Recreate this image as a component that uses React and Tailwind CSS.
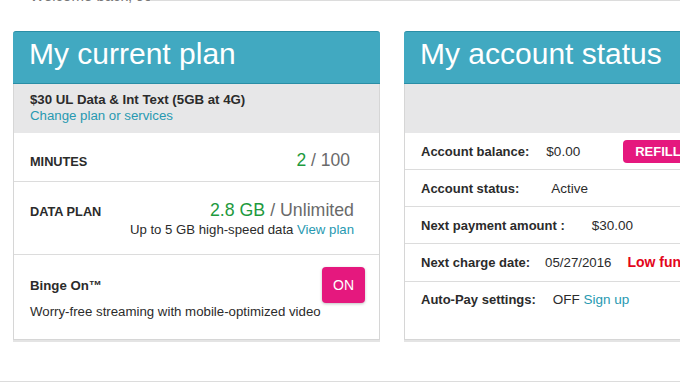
export default function App() {
  return (
    <div className="w-[680px] h-[382px] overflow-hidden bg-white flex flex-col font-['Liberation_Sans',Arial,sans-serif] text-[#333]">
      {/* clipped greeting line */}
      <div className="flex h-[3px] shrink-0">
        <div className="w-[150px] h-[3px] overflow-hidden">
          <div className="pl-[30px] -mt-[13px] text-[15px] leading-[17px] text-[#777] whitespace-nowrap">
            Welcome back, Joyce
          </div>
        </div>
        <div className="flex-1 border-t border-[#dcdcdc]"></div>
      </div>

      <div className="flex gap-[24px] pl-[13px] pt-[28px] flex-1">
        {/* Left card */}
        <div className="w-[367px] shrink-0 flex flex-col self-start shadow-[0_2px_0_#e4e4e4]">
          <div className="h-[53px] bg-[#41a9c1] border-t border-b border-[#2a8ea6] rounded-t-[3px] pl-[16px] pt-[7px]">
            <div className="text-[30px] leading-[30px] text-white">My current plan</div>
          </div>
          <div className="border-l border-r border-b border-[#d6d6d6] flex flex-col">
            <div className="h-[49px] bg-[#e7e7e8] pl-[16px] pt-[8px] text-[13.25px] leading-[16px]">
              <div className="font-bold text-[#2b2b2b]">$30 UL Data &amp; Int Text (5GB at 4G)</div>
              <div className="text-[#2799b1]">Change plan or services</div>
            </div>
            <div className="h-[49px] border-b border-[#dcdcdc] flex items-baseline justify-between pl-[16px] pr-[29px] pt-[19px]">
              <div className="text-[12.75px] leading-[12px] font-bold text-[#2b2b2b]">MINUTES</div>
              <div className="text-[17.5px] leading-[17px] text-[#6a6a6a]">
                <span className="text-[#1e9a3e]">2</span> / 100
              </div>
            </div>
            <div className="h-[73px] border-b border-[#dcdcdc] flex items-baseline justify-between pl-[16px] pr-[25px] pt-[20px]">
              <div className="text-[12.75px] leading-[12px] font-bold text-[#2b2b2b]">DATA PLAN</div>
              <div className="text-right">
                <div className="text-[17.75px] leading-[17px] text-[#6a6a6a]">
                  <span className="text-[#1e9a3e]">2.8 GB</span> / Unlimited
                </div>
                <div className="mt-[4px] text-[13.2px] leading-[13px] text-[#2b2b2b]">
                  Up to 5 GB high-speed data <span className="text-[#2799b1]">View plan</span>
                </div>
              </div>
            </div>
            <div className="h-[84px] pl-[16px] pr-[14px] pt-[12px]">
              <div className="flex items-center justify-between h-[36px]">
                <div className="text-[13.25px] leading-[13px] font-bold text-[#2b2b2b]">Binge On™</div>
                <button className="w-[43px] h-[36px] rounded-[4px] bg-[#e5187e] text-white text-[14px] shadow-[0_1px_3px_rgba(0,0,0,0.25)]">
                  ON
                </button>
              </div>
              <div className="mt-[2px] text-[13.25px] leading-[14px] text-[#2b2b2b] whitespace-nowrap">
                Worry-free streaming with mobile-optimized video
              </div>
            </div>
          </div>
        </div>

        {/* Right card */}
        <div className="w-[367px] shrink-0 flex flex-col self-start shadow-[0_2px_0_#e4e4e4]">
          <div className="h-[53px] bg-[#41a9c1] border-t border-b border-[#2a8ea6] rounded-t-[3px] pl-[16px] pt-[7px]">
            <div className="text-[30px] leading-[30px] text-white whitespace-nowrap">My account status</div>
          </div>
          <div className="border-l border-r border-b border-[#d6d6d6] flex flex-col text-[13px] leading-[13px] text-[#2b2b2b]">
            <div className="h-[49px] bg-[#e7e7e8]"></div>
            <div className="h-[37px] border-b border-[#dcdcdc] flex items-center pl-[16px]">
              <span className="font-bold">Account balance:</span>
              <span className="ml-[17px] text-[13.5px]">$0.00</span>
              <button className="ml-[43px] h-[23px] w-[80px] rounded-[4px] bg-[#e5187e] text-white font-bold text-[13px] text-left pl-[12px]">
                REFILL
              </button>
            </div>
            <div className="h-[37px] border-b border-[#dcdcdc] flex items-center pl-[16px]">
              <span className="font-bold">Account status:</span>
              <span className="ml-[32px] text-[13.5px]">Active</span>
            </div>
            <div className="h-[37px] border-b border-[#dcdcdc] flex items-center pl-[16px]">
              <span className="font-bold">Next payment amount :</span>
              <span className="ml-[27px] text-[13.5px]">$30.00</span>
            </div>
            <div className="h-[38px] border-b border-[#dcdcdc] flex items-center pl-[16px] whitespace-nowrap">
              <span className="font-bold">Next charge date:</span>
              <span className="ml-[15px] text-[13.25px]">05/27/2016</span>
              <span className="ml-[16px] font-bold text-[14px] text-[#e3051b]">Low funds</span>
            </div>
            <div className="h-[57px] flex items-start pl-[16px] pt-[11px]">
              <span className="font-bold">Auto-Pay settings:</span>
              <span className="ml-[17px] text-[13.5px]">
                OFF <span className="text-[#2799b1]">Sign up</span>
              </span>
            </div>
          </div>
        </div>
      </div>

      <div className="h-[1px] shrink-0 bg-[#dcdcdc]"></div>
    </div>
  );
}
